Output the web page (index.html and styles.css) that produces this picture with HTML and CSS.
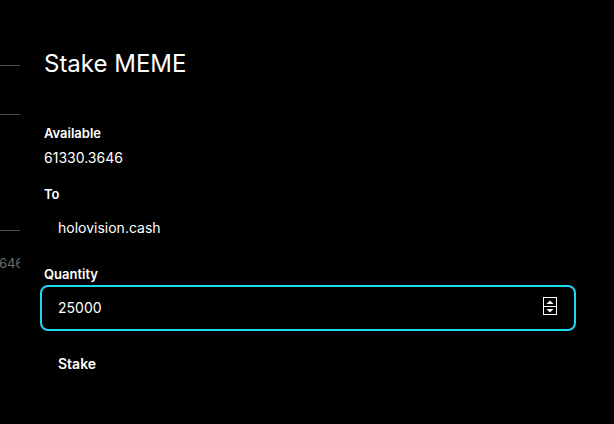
FILE: index.html
```html
<!DOCTYPE html>
<html lang="en">
<head>
<meta charset="utf-8">
<title>Stake MEME</title>
<link rel="stylesheet" href="styles.css">
</head>
<body>
  <div class="page-bg">
    <div class="rule rule-1"></div>
    <div class="rule rule-2"></div>
    <div class="rule rule-3"></div>
    <div class="bg-value"><span>6461330</span></div>
  </div>

  <div class="modal">
    <h1 class="title">Stake MEME</h1>

    <div class="group">
      <div class="label">Available</div>
      <div class="value">61330.3646</div>
    </div>

    <div class="group group-to">
      <div class="label">To</div>
      <div class="field field-plain">holovision.cash</div>
    </div>

    <div class="group group-qty">
      <div class="label">Quantity</div>
      <div class="field field-input">
        <span class="field-text">25000</span>
        <svg class="spinner" width="14" height="18" viewBox="0 0 14 18">
          <rect x="0.5" y="0.5" width="13" height="17" fill="none" stroke="#fff" stroke-width="1"/>
          <line x1="0" y1="9.5" x2="14" y2="9.5" stroke="#fff" stroke-width="1"/>
          <polygon points="3.5,7 10.5,7 7,3.5" fill="#fff"/>
          <polygon points="3.5,12 10.5,12 7,15.5" fill="#fff"/>
        </svg>
      </div>
    </div>

    <button class="stake-btn" type="button">Stake</button>
  </div>
</body>
</html>
```

FILE: styles.css
```css
html, body {
  margin: 0;
  padding: 0;
  background: #000;
}

body {
  width: 614px;
  height: 424px;
  position: relative;
  overflow: hidden;
  font-family: Inter, "Noto Sans", "Liberation Sans", sans-serif;
  color: #fff;
}

/* background page peeking out on the left */
.page-bg {
  width: 20px;
  overflow: hidden;
  padding-top: 65px;
}

.rule {
  border-top: 1px solid #4a4a4a;
}

.rule-2 {
  margin-top: 48px;
}

.rule-3 {
  margin-top: 115px;
}

.bg-value {
  margin-top: 24px;
  font-size: 13px;
  line-height: 16px;
  color: #6e6e6e;
  white-space: nowrap;
}

.bg-value span {
  display: block;
  margin-left: -1px;
}

/* modal */
.modal {
  position: absolute;
  left: 20px;
  top: 0;
  right: 0;
  bottom: 0;
  background: #000;
  padding: 50px 38px 0 20px;
  box-sizing: border-box;
}

.title {
  margin: 0 0 45px 4px;
  font-size: 24px;
  line-height: 28px;
  font-weight: 400;
  color: #fff;
}

.group {
  display: flex;
  flex-direction: column;
}

.label {
  padding-left: 4px;
  font-size: 13px;
  line-height: 20px;
  font-weight: 600;
  color: #fff;
}

.value {
  padding-left: 4px;
  margin-top: 5px;
  font-size: 14px;
  line-height: 20px;
  color: #fff;
}

.group-to {
  margin-top: 16px;
}

.group-qty {
  margin-top: 13px;
}

.field {
  margin-top: 1px;
  height: 46px;
  box-sizing: border-box;
  border: 2px solid transparent;
  border-radius: 8px;
  padding: 11px 17px 11px 16px;
  font-size: 14px;
  line-height: 20px;
  color: #fff;
  display: flex;
  align-items: center;
}

.field-input {
  border-color: #1fd8f0;
}

.field-text {
  flex: 1;
}

.spinner {
  display: block;
  flex: none;
  margin-top: -4px;
}

.stake-btn {
  margin-top: 10px;
  background: transparent;
  border: none;
  padding: 13px 18px;
  font-family: inherit;
  font-size: 14px;
  line-height: 20px;
  font-weight: 600;
  color: #fff;
  display: block;
}
```
